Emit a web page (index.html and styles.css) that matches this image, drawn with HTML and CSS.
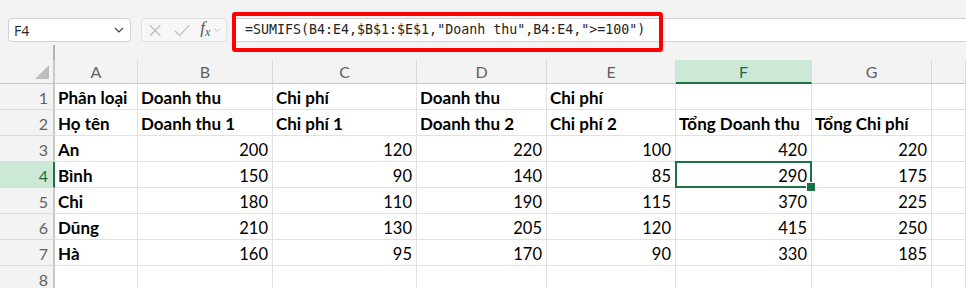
FILE: index.html
```html
<!DOCTYPE html>
<html>
<head>
<meta charset="utf-8"/>
<title>Bảng tính</title>
<link rel="stylesheet" href="styles.css">
</head>
<body>

<div id="toolbar">
  <div class="namebox">
    <span>F4</span>
    <svg class="chevron" width="10" height="6" viewBox="0 0 10 6"><path d="M1 1 L5 5 L9 1" fill="none" stroke="#424242" stroke-width="1.2"/></svg>
  </div>
  <div class="fxbox">
    <svg width="13" height="13" viewBox="0 0 13 13"><path d="M1 1 L12 12 M12 1 L1 12" stroke="#bdbdbd" stroke-width="1.3"/></svg>
    <svg width="17" height="13" viewBox="0 0 17 13"><path d="M1 7 L6 12 L16 1" fill="none" stroke="#bdbdbd" stroke-width="1.3"/></svg>
    <span class="fx">f<sub>x</sub></span>
    <svg width="7" height="4" viewBox="0 0 7 4"><path d="M0.5 0.5 L3.5 3.5 L6.5 0.5" fill="none" stroke="#bdbdbd" stroke-width="1"/></svg>
  </div>
  <div class="formula">=SUMIFS(B4:E4,$B$1:$E$1,"Doanh thu",B4:E4,"&gt;=100")</div>
  <div class="callout"></div>
</div>

<div id="splitrow"><div class="splitter"></div></div>

<div id="sheet">
  <div class="corner"></div>
  <div class="colhead">A</div>
  <div class="colhead">B</div>
  <div class="colhead">C</div>
  <div class="colhead">D</div>
  <div class="colhead">E</div>
  <div class="colhead selected">F</div>
  <div class="colhead">G</div>
  <div class="colhead"></div>

  <div class="rowhead">1</div>
  <div class="cell b">Phân loại</div>
  <div class="cell b">Doanh thu</div>
  <div class="cell b">Chi phí</div>
  <div class="cell b">Doanh thu</div>
  <div class="cell b">Chi phí</div>
  <div class="cell"></div>
  <div class="cell"></div>
  <div class="cell"></div>

  <div class="rowhead">2</div>
  <div class="cell b">Họ tên</div>
  <div class="cell b">Doanh thu 1</div>
  <div class="cell b">Chi phí 1</div>
  <div class="cell b">Doanh thu 2</div>
  <div class="cell b">Chi phí 2</div>
  <div class="cell b">Tổng Doanh thu</div>
  <div class="cell b">Tổng Chi phí</div>
  <div class="cell"></div>

  <div class="rowhead">3</div>
  <div class="cell b">An</div>
  <div class="cell n">200</div>
  <div class="cell n">120</div>
  <div class="cell n">220</div>
  <div class="cell n">100</div>
  <div class="cell n">420</div>
  <div class="cell n">220</div>
  <div class="cell"></div>

  <div class="rowhead selected">4</div>
  <div class="cell b">Bình</div>
  <div class="cell n">150</div>
  <div class="cell n">90</div>
  <div class="cell n">140</div>
  <div class="cell n">85</div>
  <div class="cell n active">290</div>
  <div class="cell n">175</div>
  <div class="cell"></div>

  <div class="rowhead">5</div>
  <div class="cell b">Chi</div>
  <div class="cell n">180</div>
  <div class="cell n">110</div>
  <div class="cell n">190</div>
  <div class="cell n">115</div>
  <div class="cell n">370</div>
  <div class="cell n">225</div>
  <div class="cell"></div>

  <div class="rowhead">6</div>
  <div class="cell b">Dũng</div>
  <div class="cell n">210</div>
  <div class="cell n">130</div>
  <div class="cell n">205</div>
  <div class="cell n">120</div>
  <div class="cell n">415</div>
  <div class="cell n">250</div>
  <div class="cell"></div>

  <div class="rowhead">7</div>
  <div class="cell b">Hà</div>
  <div class="cell n">160</div>
  <div class="cell n">95</div>
  <div class="cell n">170</div>
  <div class="cell n">90</div>
  <div class="cell n">330</div>
  <div class="cell n">185</div>
  <div class="cell"></div>

  <div class="rowhead">8</div>
  <div class="cell"></div>
  <div class="cell"></div>
  <div class="cell"></div>
  <div class="cell"></div>
  <div class="cell"></div>
  <div class="cell"></div>
  <div class="cell"></div>
  <div class="cell"></div>
</div>

</body>
</html>
```

FILE: styles.css
```css
* {
  box-sizing: border-box;
}

body {
  margin: 0;
  background: #f3f3f3;
  font-family: Lato, "Noto Sans", sans-serif;
  color: #000000;
  overflow: hidden;
}

/* formula bar */

#toolbar {
  position: relative;
  display: flex;
  align-items: center;
  height: 45px;
  padding: 18px 0 3px 8px;
}

.namebox {
  display: flex;
  align-items: center;
  justify-content: space-between;
  width: 123px;
  height: 24px;
  padding: 0 6px 0 5px;
  background: #ffffff;
  border: 1px solid #d1d1d1;
  border-radius: 4px;
  font-family: "Open Sans", sans-serif;
  font-size: 14px;
  color: #242424;
}

.fxbox {
  display: flex;
  align-items: center;
  gap: 0;
  width: 86px;
  height: 24px;
  margin-left: 10px;
  padding: 0 5px 0 7px;
  background: #f7f7f7;
  border: 1px solid #e0e0e0;
  border-radius: 4px;
}

.fxbox svg:nth-child(2) {
  margin-left: 13px;
}

.fx {
  margin-left: 10px;
  font-family: "Liberation Serif", serif;
  font-style: italic;
  font-size: 17px;
  line-height: 20px;
  color: #555555;
}

.fx sub {
  font-size: 12px;
  vertical-align: -3px;
}

.fxbox svg:last-child {
  margin-left: 4px;
}

.formula {
  flex: 1;
  height: 24px;
  margin-left: 6px;
  padding: 3px 0 0 12px;
  background: #ffffff;
  border-top: 1px solid #d1d1d1;
  border-bottom: 1px solid #d1d1d1;
  font-family: "DejaVu Sans Mono", monospace;
  font-size: 13.3px;
  color: #242424;
  white-space: nowrap;
}

/* red frame drawn round the formula */
.callout {
  position: absolute;
  left: 232px;
  top: 12px;
  width: 431px;
  height: 40px;
  border: 4px solid #ff0000;
  border-radius: 3px;
}

#splitrow {
  height: 15px;
}

.splitter {
  width: 2px;
  height: 15px;
  margin-left: 53px;
  background: #b4b4b4;
}

/* grid */

#sheet {
  display: grid;
  grid-template-columns: 55px 83px 135px 144px 130px 129px 136px 120px 1fr;
  grid-template-rows: 24px;
  grid-auto-rows: 26px;
}

.corner {
  position: relative;
  border-right: 2px solid #c8c8c8;
  border-bottom: 1px solid #c8c8c8;
}

.corner::after {
  content: "";
  position: absolute;
  right: 4px;
  bottom: 4px;
  width: 0;
  height: 0;
  border-left: 14px solid transparent;
  border-bottom: 14px solid #bdbdbd;
}

.colhead {
  text-align: center;
  font-size: 16px;
  line-height: 24px;
  color: #616161;
  border-right: 1px solid #dadada;
  border-bottom: 1px solid #c8c8c8;
}

.colhead.selected {
  background: #cbe9d6;
  color: #1e6b41;
  border-bottom: 2px solid #1e7145;
}

.rowhead {
  padding: 0 5px 0 0;
  text-align: right;
  font-size: 16px;
  line-height: 27px;
  color: #616161;
  border-right: 2px solid #c8c8c8;
  border-bottom: 1px solid #dadada;
}

.rowhead.selected {
  background: #cbe9d6;
  color: #1e6b41;
  border-right-color: #1e7145;
}

.cell {
  position: relative;
  display: flex;
  align-items: flex-end;
  padding: 0 4px 1px 3px;
  background: #ffffff;
  border-right: 1px solid #e1e1e1;
  border-bottom: 1px solid #e1e1e1;
  font-size: 16.5px;
  white-space: nowrap;
}

.cell.b {
  font-size: 17px;
  font-weight: bold;
}

.cell.n {
  justify-content: flex-end;
}

/* active cell frame and fill handle */
.cell.active::after {
  content: "";
  position: absolute;
  left: -1px;
  top: -1px;
  right: -1px;
  bottom: -1px;
  border: 2px solid #1e7145;
}

.cell.active::before {
  content: "";
  position: absolute;
  right: -5px;
  bottom: -5px;
  width: 8px;
  height: 8px;
  background: #1e7145;
  border: 1px solid #ffffff;
  z-index: 1;
}
```
